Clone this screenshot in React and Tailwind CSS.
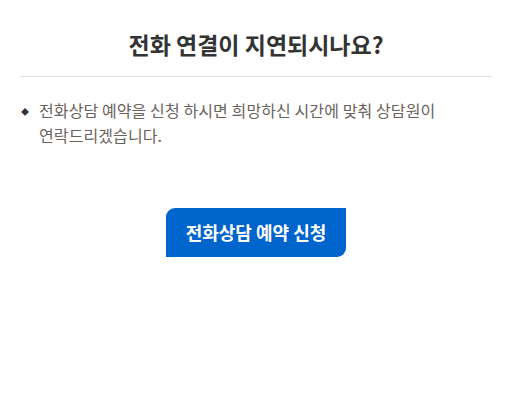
export default function App() {
    return (
        <div className="min-h-screen bg-white px-5 font-['Noto_Sans_CJK_KR','Noto_Sans',sans-serif]">
            {/* 제목 */}
            <h2 className="pt-[28px] pb-[16px] border-b border-[#dddddd] text-center text-[23px] leading-[32px] font-bold text-[#333333]">
                전화 연결이 지연되시나요?
            </h2>

            {/* 안내 문구 */}
            <ul className="mt-[21px]">
                <li className="relative pl-[19px] pr-[40px] text-[16px] leading-[25px] tracking-[0.1px] break-keep text-[#6a625c]">
                    <span className="absolute left-[1px] top-[1px] text-[8px] text-[#333333]">◆</span>
                    전화상담 예약을 신청 하시면 희망하신 시간에 맞춰 상담원이 연락드리겠습니다.
                </li>
            </ul>

            {/* 버튼 */}
            <div className="mt-[60px] flex justify-center">
                <button className="w-[180px] h-[49px] bg-[#0064cd] text-white text-[18px] font-bold rounded-tl-[9px] rounded-br-[9px]">
                    전화상담 예약 신청
                </button>
            </div>
        </div>
    );
}
